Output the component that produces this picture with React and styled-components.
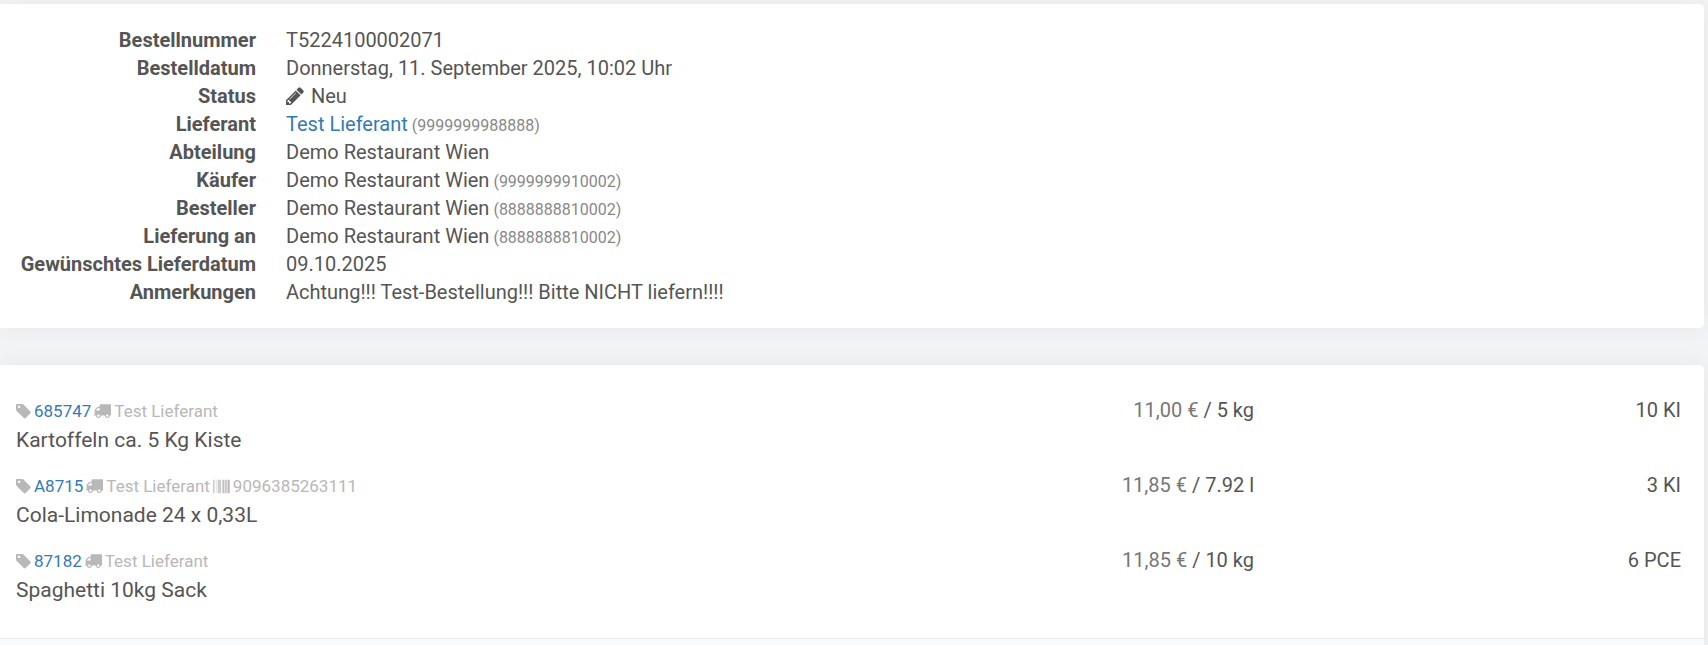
import React from 'react';
import styled, { createGlobalStyle } from 'styled-components';

const orderInfo = [
  { label: 'Bestellnummer', value: 'T5224100002071' },
  { label: 'Bestelldatum', value: 'Donnerstag, 11. September 2025, 10:02 Uhr' },
  { label: 'Status', value: 'Neu', icon: true },
  { label: 'Lieferant', value: 'Test Lieferant', link: true, gln: '9999999988888' },
  { label: 'Abteilung', value: 'Demo Restaurant Wien' },
  { label: 'Käufer', value: 'Demo Restaurant Wien', gln: '9999999910002' },
  { label: 'Besteller', value: 'Demo Restaurant Wien', gln: '8888888810002' },
  { label: 'Lieferung an', value: 'Demo Restaurant Wien', gln: '8888888810002' },
  { label: 'Gewünschtes Lieferdatum', value: '09.10.2025' },
  { label: 'Anmerkungen', value: 'Achtung!!! Test-Bestellung!!! Bitte NICHT liefern!!!!' },
];

const items = [
  { sku: '685747', supplier: 'Test Lieferant', name: 'Kartoffeln ca. 5 Kg Kiste', price: '11,00 €', unit: '5 kg', amount: '10 KI' },
  { sku: 'A8715', supplier: 'Test Lieferant', ean: '9096385263111', name: 'Cola-Limonade 24 x 0,33L', price: '11,85 €', unit: '7.92 l', amount: '3 KI' },
  { sku: '87182', supplier: 'Test Lieferant', name: 'Spaghetti 10kg Sack', price: '11,85 €', unit: '10 kg', amount: '6 PCE' },
];

const PencilIcon = () => (
  <Icon viewBox="128 128 1536 1536" $size={18} aria-hidden="true">
    <path d="M491 1536l91-91-235-235-91 91v107h128v128h107zm523-928q0-22-22-22-10 0-17 7l-542 542q-7 7-7 17 0 22 22 22 10 0 17-7l542-542q7-7 7-17zm-54-192l416 416-832 832h-416v-416zm683 96q0 53-37 90l-166 166-416-416 166-165q36-38 90-38 53 0 91 38l235 234q37 39 37 91z" />
  </Icon>
);

const TagIcon = () => (
  <Icon viewBox="128 160 1536 1536" $size={15} aria-hidden="true">
    <path d="M576 448q0-53-37.5-90.5t-90.5-37.5-90.5 37.5-37.5 90.5 37.5 90.5 90.5 37.5 90.5-37.5 37.5-90.5zm1067 576q0 53-37 90l-491 492q-39 37-91 37-53 0-90-37l-715-716q-38-37-64.5-101t-26.5-117v-416q0-52 38-90t90-38h416q53 0 117 26.5t102 64.5l715 714q37 39 37 91z" />
  </Icon>
);

const TruckIcon = () => (
  <Icon viewBox="64 128 1728 1728" $size={17} aria-hidden="true">
    <path d="M640 1408q0-52-38-90t-90-38-90 38-38 90 38 90 90 38 90-38 38-90zm-384-512h384v-256h-158q-13 0-22 9l-195 195q-9 9-9 22v30zm1280 512q0-52-38-90t-90-38-90 38-38 90 38 90 90 38 90-38 38-90zm256-1088v1024q0 15-4 26.5t-13.5 18.5-16.5 11.5-23.5 6-22.5 2-25.5 0-22.5-.5q0 106-75 181t-181 75-181-75-75-181h-384q0 106-75 181t-181 75-181-75-75-181h-64q-3 0-22.5.5t-25.5 0-22.5-2-23.5-6-16.5-11.5-13.5-18.5-4-26.5q0-26 19-45t45-19v-320q0-8-.5-35t0-38 2.5-34.5 6.5-37 14-30.5 22.5-30l198-198q19-19 50.5-32t58.5-13h160v-192q0-26 19-45t45-19h1024q26 0 45 19t19 45z" />
  </Icon>
);

const BarcodeIcon = () => (
  <Icon viewBox="0 0 1792 1792" $size={17} aria-hidden="true">
    <path d="M0 192h63v1408h-63zM94 192h31v1408h-31zM189 192h31v1408h-31zM346 192h31v1408h-31zM502 192h63v1408h-63zM596 192h95v1408h-95zM722 192h31v1408h-31zM784 192h63v1408h-63zM941 192h63v1408h-63zM1066 192h95v1408h-95zM1223 192h64v1408h-64zM1318 192h94v1408h-94zM1443 192h63v1408h-63zM1568 192h126v1408h-126zM1725 192h67v1408h-67z" />
  </Icon>
);

const App = () => {
  return (
    <Page>
      <GlobalStyle />
      <Card>
        <InfoList>
          {orderInfo.map((row) => (
            <React.Fragment key={row.label}>
              <InfoLabel>{row.label}</InfoLabel>
              <InfoValue>
                {row.icon && <StatusIcon><PencilIcon /></StatusIcon>}
                {row.link ? <Link href="#lieferant">{row.value}</Link> : row.value}
                {row.gln && <Gln> ({row.gln})</Gln>}
              </InfoValue>
            </React.Fragment>
          ))}
        </InfoList>
      </Card>
      <Card>
        <ItemTable>
          <tbody>
            {items.map((item) => (
              <tr key={item.sku}>
                <ItemCell>
                  <ItemMeta>
                    <TagIcon />
                    <Link href={`#${item.sku}`}>{item.sku}</Link>
                    <TruckIcon />
                    <span>{item.supplier}</span>
                    {item.ean && <BarcodeIcon />}
                    {item.ean && <span>{item.ean}</span>}
                  </ItemMeta>
                  <ItemName>{item.name}</ItemName>
                </ItemCell>
                <PriceCell>
                  <Price>{item.price}</Price> / {item.unit}
                </PriceCell>
                <AmountCell>{item.amount}</AmountCell>
              </tr>
            ))}
          </tbody>
        </ItemTable>
        <CardFooter />
      </Card>
    </Page>
  );
};

const GlobalStyle = createGlobalStyle`
  * {
    box-sizing: border-box;
  }

  body {
    margin: 0;
    background-color: #f2f3f5;
    color: #555;
    font-family: Roboto, "Liberation Sans", sans-serif;
    font-size: 20px;
    line-height: 28px;
  }
`;

const Page = styled.main`
  display: flex;
  flex-direction: column;
  gap: 37px;
  padding: 4px 4px 0 0;
  overflow: hidden;
`;

const Card = styled.section`
  background-color: white;
  border-radius: 0 5px 5px 0;
  box-shadow: 0 0 20px rgba(60, 70, 90, 0.06);
`;

const InfoList = styled.dl`
  display: grid;
  grid-template-columns: 256px 1fr;
  column-gap: 30px;
  margin: 0;
  padding: 22px 0;
`;

const InfoLabel = styled.dt`
  font-weight: bold;
  text-align: right;
`;

const InfoValue = styled.dd`
  margin: 0;
`;

const Link = styled.a`
  color: #337ab7;
  text-decoration: none;
`;

const Gln = styled.span`
  color: #888;
  font-size: 16px;
  line-height: 1;
`;

const Icon = styled.svg`
  width: ${(props) => props.$size}px;
  height: ${(props) => props.$size}px;
  fill: currentColor;
  flex-shrink: 0;
`;

const StatusIcon = styled.span`
  display: inline-block;
  width: 25px;
  line-height: 1;

  svg {
    vertical-align: -2px;
  }
`;

const ItemTable = styled.table`
  width: 100%;
  table-layout: fixed;
  border-collapse: collapse;

  tr:first-child td {
    padding-top: 31px;
  }

  tr:last-child td {
    padding-bottom: 34px;
  }
`;

const ItemCell = styled.td`
  width: 50%;
  padding: 0 0 17px 16px;
  vertical-align: top;
`;

const ItemMeta = styled.div`
  display: flex;
  align-items: center;
  gap: 3px;
  color: #b8b8b8;
  font-size: 17px;
  line-height: 30px;
`;

const ItemName = styled.div`
  font-size: 21px;
`;

const PriceCell = styled.td`
  width: 25%;
  padding: 0 24px 0 0;
  text-align: right;
  vertical-align: top;
`;

const AmountCell = styled.td`
  width: 25%;
  padding: 0 23px 0 0;
  text-align: right;
  vertical-align: top;
`;

const Price = styled.span`
  color: #777;
`;

const CardFooter = styled.footer`
  height: 24px;
  border-top: 1px solid #e9ebee;
  background-color: #f9fafc;
`;

export default App;
